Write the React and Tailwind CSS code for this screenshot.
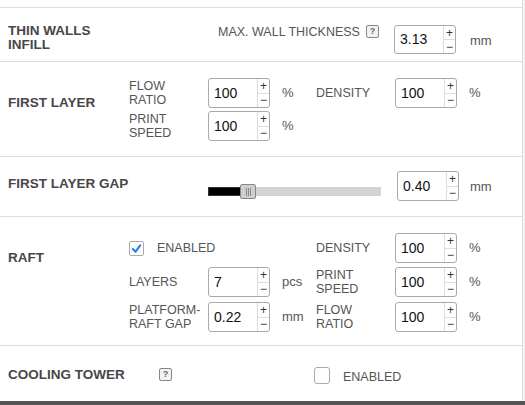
import React from "react";

const font = { fontFamily: '"Liberation Sans", Arial, sans-serif' };

const Spin = ({ value, h = "h-[30px]" }) => (
  <div className={`flex ${h} w-[62px] rounded-[3px] border border-[#a9a9a9] bg-white`}>
    <div className="flex flex-1 items-center pl-[5px] text-[14px] text-[#111]">{value}</div>
    <div className="flex w-[12px] flex-col border-l border-[#ddd] text-[#333]">
      <div className="flex flex-1 items-center justify-center border-b border-[#ddd] text-[12px] leading-none">+</div>
      <div className="flex flex-1 items-center justify-center text-[12px] leading-none">−</div>
    </div>
  </div>
);

const Help = ({ className = "" }) => (
  <div
    className={`flex h-[13px] w-[13px] shrink-0 items-center justify-center rounded-[2px] border border-[#888] bg-[#f2f2f2] text-[9px] font-bold leading-none text-[#666] ${className}`}
  >
    ?
  </div>
);

const Title = ({ children, className = "" }) => (
  <div className={`text-[13.5px] font-bold uppercase leading-[14px] text-[#474747] ${className}`}>{children}</div>
);

const Label = ({ children, className = "" }) => (
  <div className={`text-[12.5px] uppercase leading-[14px] text-[#555] ${className}`}>{children}</div>
);

const Unit = ({ children }) => <div className="text-[13px] text-[#555]">{children}</div>;

// one label + spinner + unit cell
const Field = ({ label, value, unit }) => (
  <div className="flex h-[30px] items-center">
    <Label className="w-[79px]">{label}</Label>
    <Spin value={value} />
    <div className="w-[46px] pl-[12px]">
      <Unit>{unit}</Unit>
    </div>
  </div>
);

export default function App() {
  return (
    <div className="h-[405px] w-[525px] overflow-hidden bg-white" style={font}>
      <div className="flex h-[401px]">
        <div className="w-[523px] border-r border-[#dcdcdc] pt-[7px]">
          {/* thin walls */}
          <div className="flex h-[54px] items-start border-t border-[#dcdcdc] pl-[8px]">
            <Title className="mt-[16px] w-[210px]">
              THIN WALLS
              <br />
              INFILL
            </Title>
            <div className="mt-[17px] flex w-[176px] items-start">
              <Label>MAX. WALL THICKNESS</Label>
              <Help className="ml-[6px]" />
            </div>
            <div className="mt-[17px]">
              <Spin value="3.13" h="h-[29px]" />
            </div>
            <div className="mt-[23px] pl-[14px]">
              <Unit>mm</Unit>
            </div>
          </div>

          {/* first layer */}
          <div className="flex h-[95px] items-start border-t border-[#dcdcdc] pl-[8px]">
            <Title className="mt-[34px] w-[121px]">FIRST LAYER</Title>
            <div className="mt-[16px] flex flex-col gap-[3px]">
              <div className="flex">
                <Field label={<>FLOW<br />RATIO</>} value="100" unit="%" />
                <Field label="DENSITY" value="100" unit="%" />
              </div>
              <Field label={<>PRINT<br />SPEED</>} value="100" unit="%" />
            </div>
          </div>

          {/* first layer gap */}
          <div className="flex h-[60px] items-start border-t border-[#dcdcdc] pl-[8px]">
            <Title className="mt-[20px] w-[200px]">FIRST LAYER GAP</Title>
            <div className="relative mt-[30px] h-[9px] w-[173px] bg-[#d3d3d3]">
              <div className="h-full w-[36px] border border-[#333] bg-black" />
              <div className="absolute left-[32px] top-[-3px] flex h-[15px] w-[16px] items-center justify-center gap-[1px] rounded-[2px] border border-[#888] bg-[#cfcfcf]">
                <span className="h-[8px] w-px bg-[#888]" />
                <span className="h-[8px] w-px bg-[#888]" />
                <span className="h-[8px] w-px bg-[#888]" />
              </div>
            </div>
            <div className="ml-[16px] mt-[14px]">
              <Spin value="0.40" />
            </div>
            <div className="mt-[20px] pl-[11px]">
              <Unit>mm</Unit>
            </div>
          </div>

          {/* raft */}
          <div className="flex h-[129px] items-start border-t border-[#dcdcdc] pl-[8px]">
            <Title className="mt-[34px] w-[121px]">RAFT</Title>
            <div className="mt-[16px] flex flex-col gap-[4px]">
              <div className="flex">
                <div className="flex h-[30px] w-[187px] items-center">
                  <span className="flex h-[15px] w-[15px] items-center justify-center rounded-[2px] border border-[#aaa] bg-white">
                    <svg viewBox="0 0 12 12" className="h-[11px] w-[11px]">
                      <path d="M2 6.5 L5 9.5 L10 2.5" fill="none" stroke="#2f7fe8" strokeWidth="2.4" strokeLinecap="round" strokeLinejoin="round" />
                    </svg>
                  </span>
                  <Label className="ml-[13px]">ENABLED</Label>
                </div>
                <Field label="DENSITY" value="100" unit="%" />
              </div>
              <div className="flex">
                <Field label="LAYERS" value="7" unit="pcs" />
                <Field label={<>PRINT<br />SPEED</>} value="100" unit="%" />
              </div>
              <div className="mt-[1px] flex">
                <Field label={<>PLATFORM-<br />RAFT GAP</>} value="0.22" unit="mm" />
                <Field label={<>FLOW<br />RATIO</>} value="100" unit="%" />
              </div>
            </div>
          </div>

          {/* cooling tower */}
          <div className="flex h-[56px] items-start border-t border-[#dcdcdc] pl-[8px]">
            <Title className="mt-[22px] w-[151px]">COOLING TOWER</Title>
            <Help className="mt-[22px]" />
            <span className="ml-[142px] mt-[21px] h-[17px] w-[16px] rounded-[3px] border border-[#aaa] bg-white" />
            <Label className="ml-[13px] mt-[24px]">ENABLED</Label>
          </div>
        </div>
        <div className="flex-1 bg-[#f4f4f4]" />
      </div>
      <div className="h-[4px] bg-[#555]" />
    </div>
  );
}
